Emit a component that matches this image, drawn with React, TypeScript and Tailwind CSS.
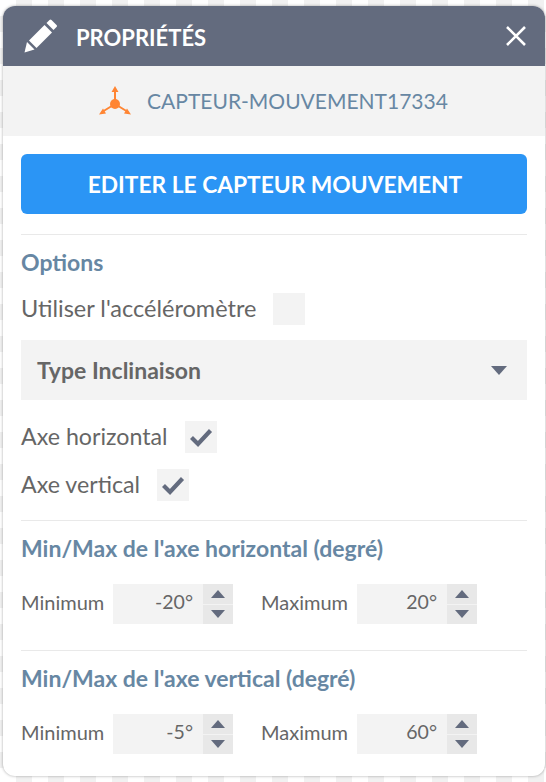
const font = "font-['Lato',sans-serif]";

function Check() {
  return (
    <div className="w-8 h-8 bg-[#f3f3f3] flex items-center justify-center">
      <svg width="26" height="26" viewBox="0 0 26 26">
        <path d="M3.500 13.500l6.500 6.500L22.500 6.500" fill="none" stroke="#636b7e" strokeWidth="4.200" />
      </svg>
    </div>
  );
}

function Spin({ label, value, width }: { label: string; value: string; width: string }) {
  return (
    <div className="flex items-center">
      <span className={`text-[20px] pb-[4px] text-[#666666] ${width}`}>{label}</span>
      <div className="flex h-10 w-[120px]">
        <div className="w-[90px] bg-[#f3f3f3] flex items-center justify-end pr-[10px] pb-[4px] text-[19.500px] text-[#666666]">{value}</div>
        <div className="w-[30px] bg-[#e8e8e8] flex flex-col">
          <div className="flex-1 flex items-center justify-center border-b border-[#f3f3f3]">
            <svg width="14" height="8" viewBox="0 0 14 8"><path d="M7 0l7 8H0z" fill="#636b7e" /></svg>
          </div>
          <div className="flex-1 flex items-center justify-center">
            <svg width="14" height="8" viewBox="0 0 14 8"><path d="M0 0h14L7 8z" fill="#636b7e" /></svg>
          </div>
        </div>
      </div>
    </div>
  );
}

function Range({ title, min, max }: { title: string; min: string; max: string }) {
  return (
    <div className="border-t border-[#e9e9e9] pt-[11px]">
      <div className="text-[23px] leading-[32px] font-bold text-[#6787a3]">{title}</div>
      <div className="flex gap-7 mt-[20px]">
        <Spin label="Minimum" value={min} width="w-[92px]" />
        <Spin label="Maximum" value={max} width="w-[96px]" />
      </div>
    </div>
  );
}

export default function App() {
  return (
    <div
      className={`w-[546px] h-[782px] pt-[6px] pl-[3px] overflow-hidden ${font} bg-[repeating-conic-gradient(#f1f1f1_0%_25%,#ffffff_0%_50%)] bg-[length:32px_32px]`}
    >
      <div className="w-[542px] h-[770px] bg-white rounded-[12px] overflow-hidden shadow-[0_0_3px_rgba(0,0,0,0.35)]">
        <div className="h-[60px] bg-[#636b7e] flex items-center pl-[20px] pr-[18px]">
          <svg width="34" height="34" viewBox="0 0 34 34" fill="#ffffff">
            <path d="M4 23l7.500 7.500L1.500 33.500z" />
            <path d="M6 21.500L21.500 6l7.500 7.500L13.500 29z" />
            <path d="M23.500 4l3-3q1-1 2 0l5 5q1 1 0 2l-3 3z" />
          </svg>
          <span className="ml-[19px] pt-[2px] text-[22px] font-bold text-white">PROPRIÉTÉS</span>
          <svg className="ml-auto" width="22" height="22" viewBox="0 0 22 22">
            <path d="M2 2l18 18M20 2L2 20" stroke="#fff" strokeWidth="2.600" fill="none" />
          </svg>
        </div>
        <div className="h-[70px] bg-[#f3f3f3] flex items-center justify-center gap-[15px] pr-[2px]">
          <svg width="34" height="30" viewBox="0 0 34 30" fill="none" stroke="#ff8533" strokeWidth="2">
            <circle cx="17" cy="18" r="5" fill="#ff8533" stroke="none" />
            <path d="M17 18V4M17 18L4 26M17 18l13 8" />
            <path d="M17 0l3.500 6h-7zM1 28.500l7-1-3-5zM33 28.500l-7-1 3-5z" fill="#ff8533" stroke="none" />
          </svg>
          <span className="text-[21px] text-[#6787a3]">CAPTEUR-MOUVEMENT17334</span>
        </div>
        <div className="px-[18px] pt-[18px]">
          <div className="h-[60px] rounded-[6px] bg-[#2b95f5] flex items-center justify-center pl-[2px] pt-[2px] text-[22.750px] font-bold text-white">
            EDITER LE CAPTEUR MOUVEMENT
          </div>
          <div className="border-t border-[#e9e9e9] mt-[20px] pt-[11px]">
            <div className="text-[23px] leading-[32px] font-bold text-[#6787a3]">Options</div>
            <div className="flex items-center h-8 mt-[15px]">
              <span className="text-[23.500px] text-[#666666]">Utiliser l'accéléromètre</span>
              <div className="w-8 h-8 bg-[#f3f3f3] ml-[17px]" />
            </div>
            <div className="h-[60px] mt-[15px] bg-[#f3f3f3] flex items-center justify-between pl-[16px] pr-[20px]">
              <span className="text-[23px] font-bold text-[#666666]">Type Inclinaison</span>
              <svg width="16" height="9" viewBox="0 0 16 9"><path d="M0 0h16L8 9z" fill="#636b7e" /></svg>
            </div>
            <div className="flex items-center h-8 mt-[21px] gap-[17px]">
              <span className="pb-[2px] text-[23.200px] text-[#666666]">Axe horizontal</span>
              <Check />
            </div>
            <div className="flex items-center h-8 mt-[16px] gap-[17px]">
              <span className="pb-[2px] text-[23.200px] text-[#666666]">Axe vertical</span>
              <Check />
            </div>
          </div>
          <div className="mt-[19px]">
            <Range title="Min/Max de l'axe horizontal (degré)" min="-20°" max="20°" />
          </div>
          <div className="mt-[26px]">
            <Range title="Min/Max de l'axe vertical (degré)" min="-5°" max="60°" />
          </div>
        </div>
      </div>
    </div>
  );
}
